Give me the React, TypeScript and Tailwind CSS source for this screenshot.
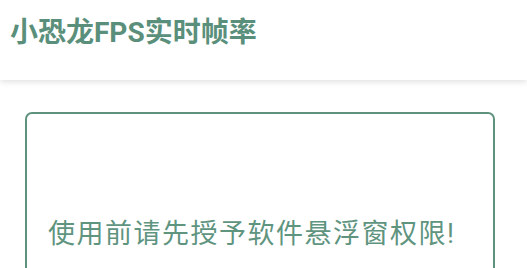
export default function App() {
  return (
    <div className="min-h-[268px] w-full overflow-hidden bg-white font-['Roboto','Noto_Sans_CJK_SC',sans-serif]">
      <header className="relative z-10 h-[80px] bg-white shadow-[0_2px_6px_rgba(0,0,0,0.12)]">
        <h1 className="pl-[10px] pt-[19px] text-[28px] font-bold leading-none text-[#5a8f7b]">
          小恐龙FPS实时帧率
        </h1>
      </header>
      <main className="pl-[25px] pt-[32px]">
        <div className="h-[220px] w-[470px] rounded-[7px] border-2 border-[#5e927d] pl-[21px] pt-[107px]">
          <p className="text-[27px] leading-none tracking-[1.5px] text-[#5f947f]">
            使用前请先授予软件悬浮窗权限!
          </p>
        </div>
      </main>
    </div>
  );
}
